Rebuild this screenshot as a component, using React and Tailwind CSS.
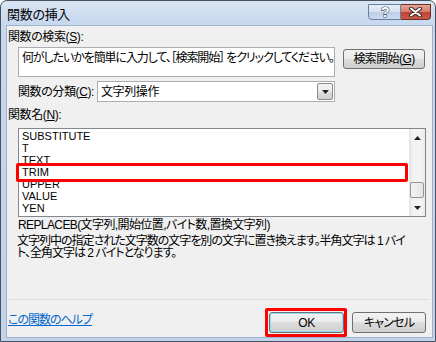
const ui = "[font-family:'Liberation_Sans','Noto_Sans_CJK_JP',sans-serif] [font-feature-settings:'palt']"

const btn =
  'flex items-center justify-center rounded-[3px] border border-[#707070] bg-[linear-gradient(#f2f2f2_0%,#ebebeb_50%,#dddddd_50%,#cfcfcf_100%)] whitespace-nowrap'

function Tri({ down }) {
  return (
    <svg width="7" height="4" viewBox="0 0 7 4">
      <path d={down ? 'M0 0h7L3.5 4z' : 'M0 4h7L3.5 0z'} fill="#222" />
    </svg>
  )
}

function Caption() {
  return (
    <div className="h-[24px] flex items-start justify-between pl-[6px]">
      <span className="text-[13px] leading-[13px] mt-[7px] tracking-[-0.3px]">関数の挿入</span>
      <div className="flex mt-[3px] mr-[4px]">
        {/* help */}
        <div className="w-[33px] h-[16px] flex items-center justify-center border border-[#6b7f9c] rounded-bl-[4px] bg-[linear-gradient(#e7eef8_0%,#d3e0f0_50%,#bccee8_50%,#c9d9ef_100%)]">
          <svg width="12" height="14" viewBox="0 0 12 14">
            <text x="6" y="12" textAnchor="middle" fontSize="14" fontWeight="700" fontFamily="Liberation Sans" fill="#fff" stroke="#4a5668" strokeWidth="1.2" paintOrder="stroke">?</text>
          </svg>
        </div>
        {/* close */}
        <div className="w-[30px] h-[16px] flex items-center justify-center border border-[#6e2c26] border-l-0 rounded-br-[4px] bg-[linear-gradient(#e6a595_0%,#d47a6a_50%,#c0412f_50%,#c95a48_100%)]">
          <svg width="13" height="10" viewBox="0 0 13 10">
            <path d="M2 1.5l9 7M11 1.5l-9 7" stroke="#3a2a28" strokeWidth="4" strokeLinecap="round" />
            <path d="M2 1.5l9 7M11 1.5l-9 7" stroke="#fff" strokeWidth="2" strokeLinecap="round" />
          </svg>
        </div>
      </div>
    </div>
  )
}

function ListBox() {
  const items = ['SUBSTITUTE', 'T', 'TEXT', 'TRIM', 'UPPER', 'VALUE', 'YEN']
  return (
    <div className="relative mt-[5px] ml-[10px] h-[89px] flex border border-[#828790] bg-white">
      <div className="flex-1 overflow-hidden pl-[3px] pt-[1px] [font-family:'Liberation_Sans',sans-serif] text-[11px] leading-[12px] tracking-normal">
        {items.map((it) => (
          <div key={it} className="h-[12px]">{it}</div>
        ))}
      </div>
      <div className="w-[16px] flex flex-col bg-[linear-gradient(90deg,#e3e3e3,#f3f3f3_25%,#f3f3f3_75%,#e9e9e9)]">
        <div className="h-[17px] flex items-center justify-center"><Tri /></div>
        <div className="flex-1">
          <div className="mt-[36px] mx-px h-[16px] rounded-[2px] border border-[#979797] bg-[linear-gradient(90deg,#f3f3f3,#e4e4e4)]" />
        </div>
        <div className="h-[17px] flex items-center justify-center"><Tri down /></div>
      </div>
      <div className="absolute left-[-3px] top-[34px] w-[392px] h-[19px] border-[3px] border-[#ff0000] rounded-[2px]" />
    </div>
  )
}

export default function App() {
  return (
    <div className={`${ui} text-[12px] text-black tracking-[-0.4px] w-[436px] h-[342px] flex flex-col border border-[#46505e] rounded-t-[7px] bg-[linear-gradient(#d9e5f4,#c6d8ef_24px,#c0d3eb)]`}>
      <Caption />
      <div className="flex-1 ml-[5px] mr-[2px] mb-[3px] flex flex-col border border-[#9fb2c9] bg-[#f0f0f0] pl-[1px] pr-[6px]">
        <div className="mt-[3px] h-[16px] leading-[16px] whitespace-nowrap">関数の検索(<u>S</u>):</div>

        <div className="mt-[2px] ml-[10px] flex gap-[8px]">
          <div className="w-[317px] shrink-0 h-[30px] border border-[#abadb3] bg-white px-[3px] pt-[2px] leading-[16px] whitespace-nowrap overflow-hidden tracking-[-1.1px]">
            何がしたいかを簡単に入力して、［検索開始］ をクリックしてください。
          </div>
          <div className={`${btn} mt-[2px] w-[82px] h-[20px] tracking-[-0.6px]`}>検索開始(<u>G</u>)</div>
        </div>

        <div className="mt-[4px] ml-[10px] w-[317px] h-[21px] flex items-center">
          <span className="whitespace-nowrap shrink-0">関数の分類(<u>C</u>):</span>
          <div className="ml-auto w-[238px] shrink-0 h-[21px] flex items-center border border-[#abadb3] bg-white">
            <span className="flex-1 pl-[3px]">文字列操作</span>
            <div className="w-[16px] h-[17px] mr-px flex items-center justify-center rounded-[2px] border border-[#8b8b8b] bg-[linear-gradient(#f2f2f2_0%,#ebebeb_50%,#dddddd_50%,#cfcfcf_100%)]">
              <Tri down />
            </div>
          </div>
        </div>

        <div className="mt-[5px] h-[16px] leading-[16px] whitespace-nowrap">関数名(<u>N</u>):</div>

        <ListBox />

        <div className="ml-[10px] h-[16px] leading-[16px] whitespace-nowrap tracking-[-0.6px]">REPLACEB(文字列,開始位置,バイト数,置換文字列)</div>
        <div className="mt-[2px] ml-[9px] leading-[12px] whitespace-nowrap tracking-[-1px]">
          <div className="h-[12px]">文字列中の指定された文字数の文字を別の文字に置き換えます。半角文字は 1 バイ</div>
          <div className="h-[12px]">ト、全角文字は 2 バイトとなります。</div>
        </div>

        <div className="mt-[40px] ml-[1px] -mr-[2px] h-px bg-[#d8dde3]" />

        <div className="mt-[12px] flex items-start">
          <a className="h-[16px] leading-[16px] text-[#0066cc] underline whitespace-nowrap tracking-[-1px]">この関数のヘルプ</a>
          <div className="relative ml-auto">
            <div className={`${btn} w-[75px] h-[21px] shadow-[inset_0_0_0_1px_#8fdcf7]`}>OK</div>
            <div className="absolute left-[-4px] right-[-3px] top-[-4px] bottom-[-4px] border-[3px] border-[#ff0000] rounded-[2px]" />
          </div>
          <div className={`${btn} ml-[8px] w-[74px] h-[21px] tracking-[-0.8px]`}>キャンセル</div>
        </div>
      </div>
    </div>
  )
}
